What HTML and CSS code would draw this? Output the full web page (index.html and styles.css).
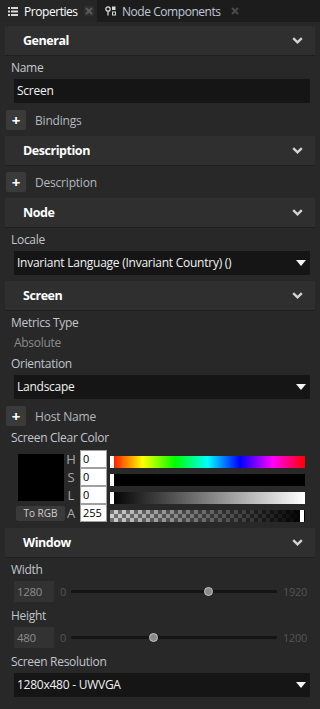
FILE: index.html
```html
<!DOCTYPE html>
<html lang="en">
<head>
  <meta charset="UTF-8">
  <meta name="viewport" content="width=device-width, initial-scale=1.0">
  <title>Properties</title>
  <link rel="stylesheet" href="styles.css">
</head>
<body>
  <div class="tabs">
    <div class="tab active">
      <svg class="tab-icon" width="10" height="9" viewBox="0 0 10 9">
        <rect x="0" y="0" width="2" height="2" fill="#d8d8d8"/><rect x="3" y="0" width="7" height="2" fill="#d8d8d8"/>
        <rect x="0" y="3.5" width="2" height="2" fill="#d8d8d8"/><rect x="3" y="3.5" width="7" height="2" fill="#d8d8d8"/>
        <rect x="0" y="7" width="2" height="2" fill="#d8d8d8"/><rect x="3" y="7" width="7" height="2" fill="#d8d8d8"/>
      </svg>
      <span class="tab-title">Properties</span>
      <span class="tab-close">
        <svg width="8" height="8" viewBox="0 0 8 8"><path d="M1 1L7 7M7 1L1 7" stroke="#5a5a5a" stroke-width="2"/></svg>
      </span>
    </div>
    <div class="tab">
      <svg class="tab-icon" width="11" height="10" viewBox="0 0 11 10">
        <circle cx="3" cy="3" r="2.2" fill="none" stroke="#d8d8d8" stroke-width="1.3"/>
        <path d="M3 5.2V9.5" stroke="#d8d8d8" stroke-width="1.3"/>
        <rect x="7" y="0.5" width="3.5" height="3.5" fill="#d8d8d8"/>
        <rect x="7.5" y="6" width="3" height="3" fill="none" stroke="#d8d8d8" stroke-width="1"/>
      </svg>
      <span class="tab-title">Node Components</span>
      <span class="tab-close">
        <svg width="8" height="8" viewBox="0 0 8 8"><path d="M1 1L7 7M7 1L1 7" stroke="#4a4a4a" stroke-width="2"/></svg>
      </span>
    </div>
  </div>

  <div class="panel">
    <section class="group">
      <div class="group-head">General<svg class="chevron" width="11" height="7" viewBox="0 0 11 7"><path d="M1.2 1.2L5.5 5.3L9.8 1.2" fill="none" stroke="#d4d4d4" stroke-width="2.4"/></svg></div>
      <div class="field-label">Name</div>
      <div class="text-box">Screen</div>
      <div class="add-row"><span class="add-btn">+</span>Bindings</div>
    </section>

    <section class="group">
      <div class="group-head">Description<svg class="chevron" width="11" height="7" viewBox="0 0 11 7"><path d="M1.2 1.2L5.5 5.3L9.8 1.2" fill="none" stroke="#d4d4d4" stroke-width="2.4"/></svg></div>
      <div class="add-row first"><span class="add-btn">+</span>Description</div>
    </section>

    <section class="group locale">
      <div class="group-head">Node<svg class="chevron" width="11" height="7" viewBox="0 0 11 7"><path d="M1.2 1.2L5.5 5.3L9.8 1.2" fill="none" stroke="#d4d4d4" stroke-width="2.4"/></svg></div>
      <div class="field-label">Locale</div>
      <div class="dropdown">Invariant Language (Invariant Country) ()<span class="caret"></span></div>
    </section>

    <section class="group">
      <div class="group-head">Screen<svg class="chevron" width="11" height="7" viewBox="0 0 11 7"><path d="M1.2 1.2L5.5 5.3L9.8 1.2" fill="none" stroke="#d4d4d4" stroke-width="2.4"/></svg></div>
      <div class="field-label">Metrics Type</div>
      <div class="static-value">Absolute</div>
      <div class="field-label">Orientation</div>
      <div class="dropdown">Landscape<span class="caret"></span></div>
      <div class="add-row"><span class="add-btn">+</span>Host Name</div>
      <div class="field-label">Screen Clear Color</div>
      <div class="picker">
        <div class="picker-left">
          <div class="swatch"></div>
          <div class="to-rgb">To RGB</div>
        </div>
        <div class="picker-rows">
          <span class="channel">H</span><span class="channel-input">0</span><div class="bar hue"><span class="marker"></span></div>
          <span class="channel">S</span><span class="channel-input">0</span><div class="bar sat"><span class="marker"></span></div>
          <span class="channel">L</span><span class="channel-input">0</span><div class="bar lum"><span class="marker"></span></div>
          <span class="channel">A</span><span class="channel-input">255</span><div class="bar alpha"><span class="marker end"></span></div>
        </div>
      </div>
    </section>

    <section class="group">
      <div class="group-head">Window<svg class="chevron" width="11" height="7" viewBox="0 0 11 7"><path d="M1.2 1.2L5.5 5.3L9.8 1.2" fill="none" stroke="#d4d4d4" stroke-width="2.4"/></svg></div>
      <div class="field-label">Width</div>
      <div class="slider-row">
        <span class="num-box">1280</span>
        <span class="limit">0</span>
        <div class="track"><span class="thumb" style="left: 66.7%;"></span></div>
        <span class="limit">1920</span>
      </div>
      <div class="field-label">Height</div>
      <div class="slider-row">
        <span class="num-box">480</span>
        <span class="limit">0</span>
        <div class="track"><span class="thumb" style="left: 40%;"></span></div>
        <span class="limit">1200</span>
      </div>
      <div class="field-label">Screen Resolution</div>
      <div class="dropdown">1280x480 - UWVGA<span class="caret"></span></div>
    </section>
  </div>
</body>
</html>
```

FILE: styles.css
```css
body {
  margin: 0;
  background: #282828;
  font-family: 'Open Sans', 'Noto Sans', sans-serif;
  font-size: 12px;
  color: #c4c4c4;
  height: 709px;
  overflow: hidden;
}

.tabs {
  display: flex;
  height: 22px;
  background: #1c1c1c;
}

.tab {
  display: flex;
  align-items: center;
  padding: 0 8px;
  color: #c0c8d8;
  font-size: 12px;
}

.tab.active {
  background: #262626;
  color: #ffffff;
  width: 97px;
  box-sizing: border-box;
  padding-right: 3px;
}

.tab-icon {
  margin-right: 6px;
  flex: none;
}

.tab-title {
  white-space: nowrap;
  letter-spacing: -0.45px;
}

.tab-close {
  display: flex;
  align-items: center;
  justify-content: center;
  margin-left: auto;
  width: 10px;
  height: 10px;
  background: #2e2e2e;
}

.tab:not(.active) .tab-close {
  background: none;
  margin-left: 9px;
}

.panel {
  padding: 4px 5px 0 5px;
}

.group + .group {
  margin-top: 6px;
}

.group.locale {
  margin-bottom: 2px;
}

.group-head {
  display: flex;
  align-items: center;
  justify-content: space-between;
  height: 30px;
  box-sizing: border-box;
  padding: 0 12px 0 18px;
  background: #2f2f2f;
  border-bottom: 1px solid #1f1f1f;
  color: #ffffff;
  font-weight: bold;
  font-size: 12.5px;
  letter-spacing: -0.45px;
}

.field-label {
  height: 23px;
  padding: 1px 0 0 6px;
  box-sizing: border-box;
  line-height: 22px;
  color: #c2c6cc;
  letter-spacing: -0.3px;
}

.text-box,
.dropdown {
  position: relative;
  margin: 0 5px 0 9px;
  height: 24px;
  line-height: 24px;
  padding-left: 3px;
  background: #151515;
  color: #f2f2f2;
  font-size: 12px;
  letter-spacing: -0.25px;
  white-space: nowrap;
}

.caret {
  position: absolute;
  right: 4px;
  top: 9px;
  width: 0;
  height: 0;
  border-left: 5px solid transparent;
  border-right: 5px solid transparent;
  border-top: 6px solid #f4f4f4;
}

.add-row {
  display: flex;
  align-items: center;
  margin-top: 7px;
  height: 20px;
  color: #b4b8be;
  font-size: 12px;
  letter-spacing: -0.2px;
}

.add-row.first {
  margin-top: 6px;
}

.add-btn {
  display: flex;
  align-items: center;
  justify-content: center;
  width: 20px;
  height: 20px;
  margin: 0 9px 0 1px;
  background: #3a3a3a;
  border-radius: 2px;
  color: #ffffff;
  font-weight: bold;
  font-size: 15px;
  line-height: 1;
}

.static-value {
  height: 18px;
  line-height: 18px;
  padding-left: 9px;
  color: #8c8c8c;
  letter-spacing: -0.3px;
}

/* colour picker */
.picker {
  display: flex;
  margin: 1px 0 2px 11px;
}

.picker-left {
  width: 49px;
  display: flex;
  flex-direction: column;
  align-items: center;
}

.swatch {
  width: 46px;
  height: 47px;
  margin-top: 4px;
  background: #000000;
}

.to-rgb {
  margin-top: 5px;
  width: 49px;
  height: 15px;
  line-height: 15px;
  text-align: center;
  background: #3a3a3a;
  border-radius: 2px;
  color: #d0d0d0;
  font-size: 10px;
}

.picker-rows {
  display: grid;
  grid-template-columns: 12px 27px 195px;
  grid-auto-rows: 18px;
  column-gap: 3px;
}

.channel {
  text-align: center;
  line-height: 18px;
  color: #a8a8a8;
  font-size: 13px;
}

.channel-input {
  box-sizing: border-box;
  height: 18px;
  border: 1px solid #a0a0a0;
  background: #ffffff;
  color: #000000;
  font-size: 11px;
  line-height: 16px;
  padding-left: 2px;
}

.bar {
  position: relative;
  align-self: end;
  height: 12px;
}

.bar.hue {
  background: linear-gradient(to right, #ff0000, #ffff00, #00ff00, #00ffff, #0000ff, #ff00ff, #ff0000);
}

.bar.sat {
  background: #000000;
}

.bar.lum {
  background: linear-gradient(to right, #000000, #ffffff);
}

.bar.alpha {
  background:
    linear-gradient(to right, rgba(0, 0, 0, 0), #000000),
    repeating-conic-gradient(#d0d0d0 0 25%, #707070 0 50%) 0 0 / 8px 8px;
}

.marker {
  position: absolute;
  left: 0;
  top: 0;
  width: 4px;
  height: 12px;
  background: #ffffff;
}

.marker.end {
  left: auto;
  right: 1px;
}

/* sliders */
.slider-row {
  display: flex;
  align-items: center;
  height: 21px;
  margin: 0 8px 2px 9px;
}

.num-box {
  width: 40px;
  height: 21px;
  line-height: 21px;
  padding-left: 3px;
  box-sizing: border-box;
  background: #323232;
  color: #8c8c8c;
  font-size: 11.5px;
  letter-spacing: -0.3px;
}

.limit {
  color: #545454;
  font-size: 11px;
  letter-spacing: -0.3px;
  margin: 0 5px 0 6px;
}

.slider-row .limit:last-child {
  margin: 0 0 0 6px;
}

.track {
  position: relative;
  flex: 1;
  height: 3px;
  border-radius: 2px;
  background: #141414;
}

.thumb {
  position: absolute;
  top: -3px;
  width: 7px;
  height: 7px;
  margin-left: -4px;
  border-radius: 50%;
  background: #8a8a8a;
  border: 1px solid #c4c4c4;
}
```
